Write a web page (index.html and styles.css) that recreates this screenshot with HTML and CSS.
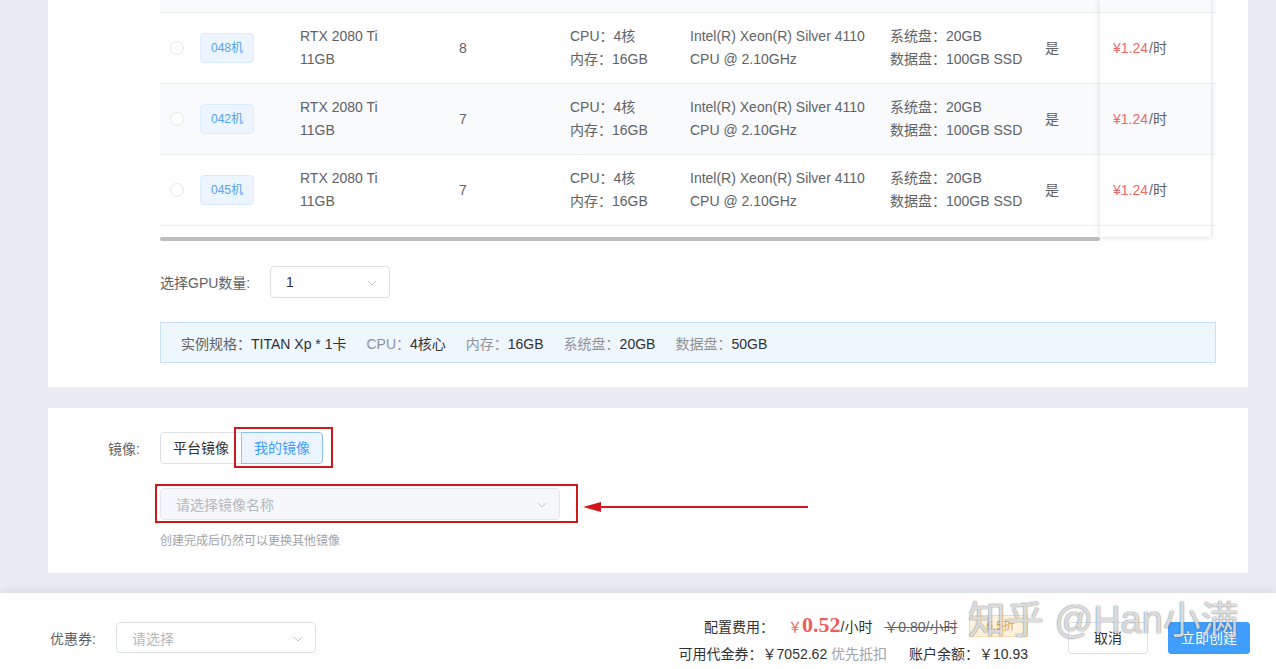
FILE: index.html
```html
<!DOCTYPE html>
<html lang="zh-CN">
<head>
<meta charset="utf-8">
<title>创建实例</title>
<link rel="stylesheet" href="styles.css">
</head>
<body>
<div class="card card-top">
  <div class="table">
    <div class="row stub striped"></div>
    <div class="row">
      <div class="c c1"><span class="radio"></span></div>
      <div class="c c2"><span class="tag">048机</span></div>
      <div class="c c3">RTX 2080 Ti<br>11GB</div>
      <div class="c c4">8</div>
      <div class="c c5">CPU：4核<br>内存：16GB</div>
      <div class="c c6">Intel(R) Xeon(R) Silver 4110<br>CPU @ 2.10GHz</div>
      <div class="c c7">系统盘：20GB<br>数据盘：100GB SSD</div>
      <div class="c c8">是</div>
    </div>
    <div class="row striped">
      <div class="c c1"><span class="radio"></span></div>
      <div class="c c2"><span class="tag">042机</span></div>
      <div class="c c3">RTX 2080 Ti<br>11GB</div>
      <div class="c c4">7</div>
      <div class="c c5">CPU：4核<br>内存：16GB</div>
      <div class="c c6">Intel(R) Xeon(R) Silver 4110<br>CPU @ 2.10GHz</div>
      <div class="c c7">系统盘：20GB<br>数据盘：100GB SSD</div>
      <div class="c c8">是</div>
    </div>
    <div class="row">
      <div class="c c1"><span class="radio"></span></div>
      <div class="c c2"><span class="tag">045机</span></div>
      <div class="c c3">RTX 2080 Ti<br>11GB</div>
      <div class="c c4">7</div>
      <div class="c c5">CPU：4核<br>内存：16GB</div>
      <div class="c c6">Intel(R) Xeon(R) Silver 4110<br>CPU @ 2.10GHz</div>
      <div class="c c7">系统盘：20GB<br>数据盘：100GB SSD</div>
      <div class="c c8">是</div>
    </div>
    <div class="rest"></div>
    <div class="scrollbar"></div>
    <div class="fixed-col">
      <div class="frow stub striped"></div>
      <div class="frow"><span class="price">¥1.24</span>/时</div>
      <div class="frow striped"><span class="price">¥1.24</span>/时</div>
      <div class="frow"><span class="price">¥1.24</span>/时</div>
    </div>
  </div>

  <div class="gpu-row">
    <span class="gpu-label">选择GPU数量:</span>
    <div class="select gpu-select"><span class="val">1</span>
      <svg class="chev" width="10" height="6" viewBox="0 0 10 6"><polyline points="1,1 5,5 9,1" fill="none" stroke="#c0c4cc" stroke-width="1"/></svg>
    </div>
  </div>

  <div class="spec">
    <span><span class="k1">实例规格：</span><span class="v">TITAN Xp * 1卡</span></span>
    <span><span class="k">CPU：</span><span class="v">4核心</span></span>
    <span><span class="k">内存：</span><span class="v">16GB</span></span>
    <span><span class="k">系统盘：</span><span class="v">20GB</span></span>
    <span><span class="k">数据盘：</span><span class="v">50GB</span></span>
  </div>
</div>

<div class="card card-image">
  <div class="image-row">
    <span class="form-label">镜像:</span>
    <div class="radio-group">
      <span class="rbtn">平台镜像</span>
      <span class="rbtn active">我的镜像</span>
    </div>
  </div>
  <div class="select image-select"><span class="ph">请选择镜像名称</span>
    <svg class="chev" width="10" height="6" viewBox="0 0 10 6"><polyline points="1,1 5,5 9,1" fill="none" stroke="#c0c4cc" stroke-width="1"/></svg>
  </div>
  <div class="hint">创建完成后仍然可以更换其他镜像</div>

  <div class="mark mark1"></div>
  <div class="mark mark2"></div>
  <svg class="arrow" width="232" height="16" viewBox="0 0 232 16">
    <line x1="16" y1="8" x2="227" y2="8" stroke="#d4161c" stroke-width="2"/>
    <polygon points="2,8 20,3 20,13" fill="#d4161c"/>
  </svg>
</div>

<div class="footer">
  <div class="coupon">
    <span class="coupon-label">优惠券:</span>
    <div class="select coupon-select"><span class="ph">请选择</span>
      <svg class="chev" width="10" height="6" viewBox="0 0 10 6"><polyline points="1,1 5,5 9,1" fill="none" stroke="#c0c4cc" stroke-width="1"/></svg>
    </div>
  </div>
  <div class="cost">
    <div class="cost-line1">
      <span class="dark">配置费用：</span>
      <span class="yen">￥</span><span class="big">0.52</span><span class="dark">/小时</span>
      <span class="old">￥0.80/小时</span>
      <span class="discount">6.5折</span>
    </div>
    <div class="cost-line2">
      <span class="dark">可用代金券：￥7052.62</span> <span class="muted">优先抵扣</span>
      <span class="dark balance">账户余额：￥10.93</span>
    </div>
  </div>
  <span class="btn btn-cancel">取消</span>
  <span class="btn btn-primary">立即创建</span>
  <div class="watermark">知乎 @Han小满</div>
</div>
</body>
</html>
```

FILE: styles.css
```css
* { box-sizing: border-box; }
body {
  margin: 0;
  background: #e9edf3;
  font-family: "Liberation Sans", "Noto Sans CJK SC", sans-serif;
  font-size: 14px;
  color: #606266;
}
.card {
  background: #fff;
  margin: 0 28px 0 48px;
}
.card-top {
  padding: 0 32px 24px 112px;
}
.table {
  position: relative;
  height: 241px;
  width: 1056px;
}
.row {
  display: grid;
  grid-template-columns: 40px 100px 159px 111px 120px 200px 155px 1fr;
  height: 71px;
  border-bottom: 1px solid #ebeef5;
  align-items: center;
  line-height: 23px;
}
.row.stub { height: 13px; }
.striped { background: #f9fafc; }
.c { white-space: nowrap; }
.radio {
  display: block;
  width: 14px;
  height: 14px;
  border: 1px solid #e4e7ed;
  border-radius: 50%;
  background: #fff;
  margin-left: 10px;
}
.tag {
  display: inline-block;
  height: 30px;
  line-height: 28px;
  padding: 0 10px;
  font-size: 12px;
  color: #56a3f0;
  background: #ecf5ff;
  border: 1px solid #d9ecff;
  border-radius: 4px;
}
.rest { height: 11px; }
.scrollbar {
  width: 940px;
  height: 4px;
  background: #bcbcbc;
  border-radius: 2px;
}
.fixed-col {
  position: absolute;
  top: 0;
  left: 940px;
  width: 112px;
  height: 237px;
  background: #fff;
  border-right: 1px solid #e6e8ec;
  box-shadow: -2px 0 6px rgba(0,0,0,0.06), 0 2px 4px rgba(0,0,0,0.06);
}
.frow {
  height: 71px;
  line-height: 70px;
  padding-left: 13px;
  border-bottom: 1px solid #ebeef5;
}
.frow.stub { height: 13px; }
.price { color: #ec6a6a; margin-right: 1px; }

.gpu-row {
  display: flex;
  align-items: center;
  margin-top: 25px;
}
.gpu-label { width: 110px; color: #606266; }
.select {
  position: relative;
  height: 32px;
  border: 1px solid #dcdfe6;
  border-radius: 4px;
  background: #fff;
  display: flex;
  align-items: center;
  padding-left: 15px;
}
.chev { position: absolute; right: 12px; top: 13px; }
.gpu-select { width: 120px; }
.val { color: #303133; }
.spec {
  margin-top: 24px;
  height: 41px;
  background: #eef6fe;
  border: 1px solid #c8e1f7;
  display: flex;
  align-items: center;
  gap: 20px;
  padding-left: 20px;
  white-space: nowrap;
}
.spec .k1 { color: #606266; }
.spec .k { color: #909399; }
.spec .v { color: #303133; }

.card-image {
  margin-top: 21px;
  position: relative;
  height: 165px;
  padding-top: 24px;
}
.image-row { display: flex; align-items: center; }
.form-label {
  width: 92px;
  text-align: right;
  margin-right: 20px;
  color: #606266;
}
.radio-group { display: flex; }
.rbtn {
  height: 32px;
  line-height: 30px;
  padding: 0 12px;
  border: 1px solid #dcdfe6;
  color: #303133;
  background: #fff;
}
.rbtn:first-child { border-radius: 4px 0 0 4px; }
.rbtn.active {
  margin-left: -1px;
  border-color: #8cc0ee;
  background: #ecf5ff;
  color: #409eff;
  border-radius: 0 4px 4px 0;
}
.image-select {
  margin: 24px 0 0 112px;
  width: 400px;
  background: #f5f7fa;
  border-color: #e4e7ed;
}
.ph { color: #b4b8bf; }
.hint {
  margin: 11px 0 0 112px;
  font-size: 12px;
  line-height: 20px;
  color: #a0a3a8;
}
.mark {
  position: absolute;
  border: 2px solid #cc1a1a;
}
.mark1 { left: 186px; top: 19px; width: 99px; height: 41px; }
.mark2 { left: 107px; top: 76px; width: 423px; height: 39px; }
.arrow { position: absolute; left: 533px; top: 91px; }

.footer {
  position: relative;
  margin-top: 20px;
  height: 76px;
  background: #fff;
  box-shadow: 0 -4px 10px rgba(0,0,0,0.06);
  display: flex;
  align-items: flex-start;
  padding: 0 26px 0 50px;
}
.coupon { display: flex; align-items: center; margin-top: 29px; }
.coupon-label { width: 66px; color: #606266; }
.coupon-select { width: 200px; height: 31px; border-color: #dcdfe6; }
.cost {
  margin-left: auto;
  margin-top: 18px;
  text-align: right;
  white-space: nowrap;
}
.cost-line1 { height: 28px; line-height: 28px; }
.cost-line2 { height: 30px; line-height: 30px; }
.dark { color: #303133; }
.muted { color: #a0a3a8; }
.yen { color: #f05c5c; margin-left: 10px; }
.big {
  color: #f05c5c;
  font-family: "Liberation Serif", serif;
  font-weight: bold;
  font-size: 22px;
}
.old {
  margin-left: 8px;
  color: #606266;
  text-decoration: line-through;
}
.discount {
  display: inline-block;
  margin-left: 8px;
  height: 22px;
  line-height: 20px;
  padding: 0 12px 0 16px;
  font-size: 12px;
  color: #e6a23c;
  background: #fdf3dc;
  border: 1px solid #f5dab1;
  vertical-align: 2px;
}
.balance { margin-left: 18px; }
.btn {
  margin-top: 29px;
  height: 32px;
  line-height: 30px;
  text-align: center;
  border-radius: 3px;
  border: 1px solid #dcdfe6;
}
.btn-cancel {
  margin-left: 40px;
  width: 80px;
  color: #303133;
  background: #fff;
}
.btn-primary {
  margin-left: 20px;
  width: 82px;
  color: #fff;
  background: #409eff;
  border-color: #409eff;
}
.watermark {
  position: absolute;
  left: 968px;
  top: 1px;
  font-size: 38px;
  line-height: 52px;
  white-space: nowrap;
  color: rgba(255,255,255,0.78);
  text-shadow: 0 0 1px rgba(0,0,0,0.55), 0 0 2px rgba(0,0,0,0.25);
  pointer-events: none;
}
```
